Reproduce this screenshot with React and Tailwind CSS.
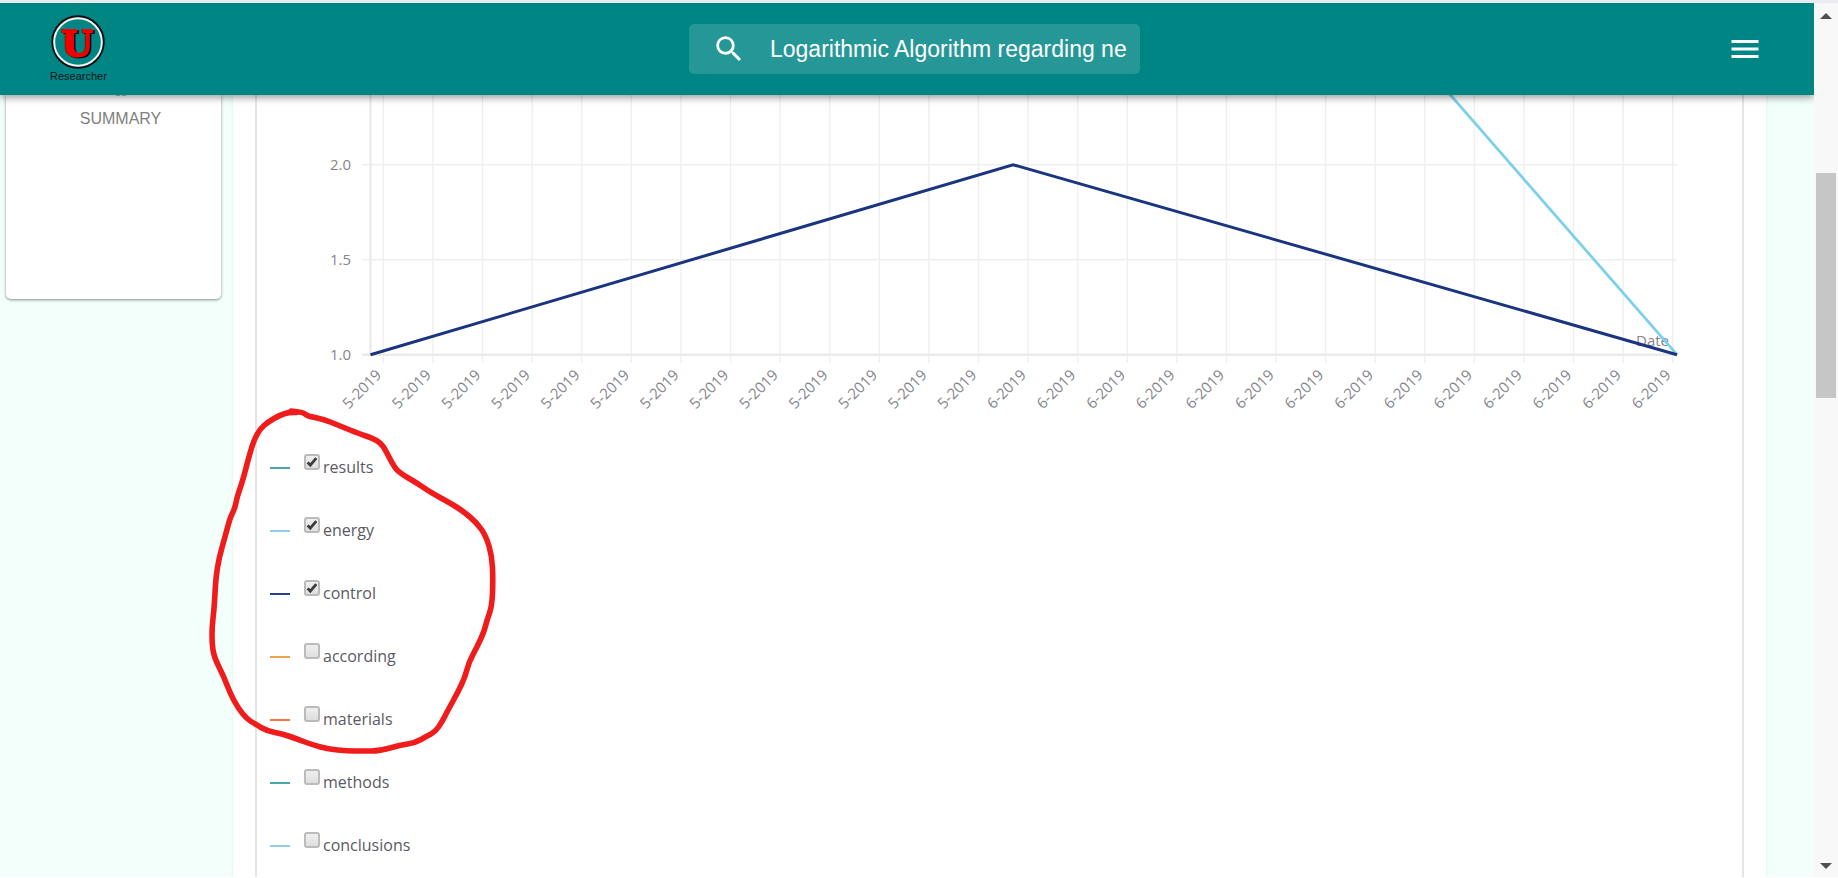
import { useState } from "react";
import { MdSearch, MdMenu } from "react-icons/md";

const TERMS = [
  { name: "results", color: "#45a9a9", on: true },
  { name: "energy", color: "#93cbe0", on: true },
  { name: "control", color: "#27408b", on: true },
  { name: "according", color: "#f0a050", on: false },
  { name: "materials", color: "#ff7043", on: false },
  { name: "methods", color: "#45a9a9", on: false },
  { name: "conclusions", color: "#8fd0e8", on: false },
];

const TICKS = Array.from({ length: 27 }, (_, i) => ({
  x: 126.4 + i * 49.59,
  label: i < 13 ? "5-2019" : "6-2019",
}));

const LEVELS = [
  { y: 69.7, label: "2.0" },
  { y: 164.7, label: "1.5" },
  { y: 259.7, label: "1.0" },
];

function Logo() {
  return (
    <svg viewBox="0 0 60 72" className="h-[72px] w-[60px]" role="img" aria-label="U Researcher">
      <circle cx="30" cy="29" r="25.6" fill="none" stroke="#0a0f0f" strokeWidth="2.2" />
      <circle cx="30" cy="29" r="23.8" fill="none" stroke="#f2f2f2" strokeWidth="2" />
      <g fontFamily="'DejaVu Serif', serif" fontWeight="700" fontSize="36" textAnchor="middle" strokeWidth="1.8">
        <text x="31" y="43.5" fill="#0a0a0a" stroke="#0a0a0a">U</text>
        <text x="29" y="42.5" fill="#f20000" stroke="#f20000">U</text>
      </g>
      <text x="2" y="67" fontFamily="'Liberation Sans', sans-serif" fontSize="11" fill="#0a1414">
        Researcher
      </text>
    </svg>
  );
}

function Header() {
  return (
    <header className="relative z-10 flex h-[92px] shrink-0 items-center justify-between bg-[#008585] pr-[51px] pl-12 shadow-[0_2px_8px_rgba(0,0,0,0.45)]">
      <a href="#home">
        <Logo />
      </a>
      <label className="mr-1.5 flex h-[50px] w-[451px] items-center rounded-[5px] bg-white/15 pr-2.5 pl-[23px] text-white">
        <MdSearch size={34} aria-hidden="true" />
        <input
          type="text"
          aria-label="Search"
          defaultValue="Logarithmic Algorithm regarding ne"
          className="ml-6 min-w-0 flex-1 bg-transparent font-['Liberation_Sans',sans-serif] text-[23px] text-white outline-none"
        />
      </label>
      <button type="button" aria-label="Menu" className="text-white">
        <MdMenu size={36} />
      </button>
    </header>
  );
}

function Sidebar() {
  return (
    <aside className="w-[233px] shrink-0 pr-3 pl-1.5">
      <div className="flex h-[204px] flex-col items-center rounded-b-[5px] bg-white shadow-[0_1px_3px_rgba(0,0,0,0.45)]">
        <a
          href="#summary"
          className="-mt-5 flex flex-col items-center gap-3 pl-3.5 font-['Liberation_Sans',sans-serif] text-base leading-5 text-[#808080]"
        >
          <svg viewBox="0 0 22 22" className="size-[22px]" aria-hidden="true">
            <path d="M3 2 H19 V15 H3 Z M6 15 H10 V20.5 H6 Z M12 15 H16 V20.5 H12 Z" fill="#7a7a7a" />
          </svg>
          SUMMARY
        </a>
      </div>
    </aside>
  );
}

function Chart() {
  return (
    <svg
      viewBox="0 0 1485 341"
      className="block w-full"
      fontFamily="'Open Sans', 'Noto Sans', sans-serif"
      fontSize="15"
      fill="#85858c"
    >
      <g stroke="#efeff2" strokeWidth="1.4">
        {TICKS.map((t) => (
          <line key={t.x} x1={t.x} x2={t.x} y1="-2" y2="268" />
        ))}
        {LEVELS.map((l) => (
          <line key={l.y} x1="105" x2="1420" y1={l.y} y2={l.y} />
        ))}
      </g>
      <g stroke="#ebebee" strokeWidth="2.4">
        <line x1="113.5" x2="113.5" y1="-2" y2="259.7" />
        <line x1="105" x2="1420" y1="259.7" y2="259.7" />
      </g>
      {LEVELS.map((l) => (
        <text key={l.y} x="94" y={l.y + 5} textAnchor="end">
          {l.label}
        </text>
      ))}
      {TICKS.map((t) => (
        <text key={t.x} textAnchor="end" transform={`translate(${t.x - 1} 281) rotate(-45)`}>
          {t.label}
        </text>
      ))}
      <text x="1412" y="251" textAnchor="end">
        Date
      </text>
      <path d="M1190 -4 L1420 259.7" fill="none" stroke="#7dd0ec" strokeWidth="2.8" />
      <path d="M113.5 259.7 L756 69.7 L1420 259.7" fill="none" stroke="#1a3480" strokeWidth="3" />
    </svg>
  );
}

function Legend() {
  const [checked, setChecked] = useState(TERMS.map((t) => t.on));
  const toggle = (i) => setChecked(checked.map((c, j) => (j === i ? !c : c)));
  return (
    <ul className="pl-[13px]">
      {TERMS.map((term, i) => (
        <li key={term.name} className="flex h-[63px] items-center">
          <span className="h-0.5 w-5" style={{ backgroundColor: term.color }} />
          <label className="ml-3.5 flex items-center gap-[3px] pb-0.5 font-['Open_Sans','Noto_Sans',sans-serif] text-base text-[#5a5a64]">
            <span className="mb-2.5 grid">
              <input
                type="checkbox"
                checked={checked[i]}
                onChange={() => toggle(i)}
                className="size-4 appearance-none rounded-[3px] border-2 border-[#bbbbbb] bg-linear-to-b from-[#efefef] to-[#dedede] [grid-area:1/1]"
              />
              {checked[i] && (
                <svg viewBox="0 0 16 16" className="pointer-events-none size-4 [grid-area:1/1]" aria-hidden="true">
                  <path d="M3.6 8.4 L6.3 11.2 L12.3 4.2" fill="none" stroke="#3c3c3c" strokeWidth="2.8" />
                </svg>
              )}
            </span>
            {term.name}
          </label>
        </li>
      ))}
    </ul>
  );
}

const POINTS = [
  [291, 411], [303, 412], [307, 416], [323, 419], [340, 426], [360, 434], [372, 438], [381, 443], [386, 451],
  [392, 463], [398, 472], [417, 483], [430, 492], [450, 503], [463, 511], [477, 523], [486, 536], [492, 556],
  [493, 580], [492, 606], [487, 620], [484, 632], [477, 647], [469, 662], [465, 677], [458, 692], [448, 710],
  [442, 722], [435, 732], [427, 736], [415, 743], [400, 745], [380, 751], [363, 751], [347, 751], [328, 749],
  [313, 745], [297, 739], [283, 734], [267, 731], [255, 724], [247, 719], [238, 708], [230, 693], [224, 677],
  [214, 657], [212, 643], [212, 627], [214, 610], [215, 593], [216, 577], [219, 558], [225, 537], [230, 518],
  [235, 508], [237, 497], [242, 483], [246, 468], [250, 453], [254, 440], [260, 429], [268, 422], [280, 415],
  [290, 412], [303, 413],
];

// Quadratic segments through the midpoints keep the pen line round.
const STROKE = POINTS.slice(1, -1).reduce((d, [x, y], i) => {
  const [nx, ny] = POINTS[i + 2];
  return `${d} Q${x} ${y} ${(x + nx) / 2} ${(y + ny) / 2}`;
}, `M${POINTS[0].join(" ")}`);

function Annotation() {
  return (
    <svg
      viewBox="200 400 300 360"
      className="pointer-events-none absolute top-[397px] left-[200px] z-20 h-[360px] w-[300px]"
      aria-hidden="true"
    >
      <path d={STROKE} fill="none" stroke="#f01c1c" strokeWidth="5.6" strokeLinejoin="round" strokeLinecap="round" />
    </svg>
  );
}

function Scrollbar() {
  return (
    <div className="flex w-6 shrink-0 flex-col items-center bg-[#f8f8f8] pt-2.5 pb-2" aria-hidden="true">
      <svg viewBox="0 0 12 6" className="h-1.5 w-3">
        <path d="M0 6 L6 0 L12 6 Z" fill="#505050" />
      </svg>
      <div className="mt-[154px] h-[225px] w-5 bg-[#c6c6c6]" />
      <svg viewBox="0 0 12 6" className="mt-auto h-1.5 w-3">
        <path d="M0 0 L6 6 L12 0 Z" fill="#505050" />
      </svg>
    </div>
  );
}

export default function App() {
  return (
    <div className="relative flex h-screen overflow-hidden border-t-[3px] border-b border-t-[#e9ebef] border-b-white">
      <div className="flex min-w-0 flex-1 flex-col overflow-hidden bg-[#f3fffb]">
        <Header />
        <div className="flex min-h-0 flex-1">
          <Sidebar />
          <main className="mr-12 min-w-0 flex-1 bg-white px-[22px] shadow-[0_0_3px_#d5f5d8]">
            <section className="border-x-2 border-[#e5e5e5]">
              <Chart />
              <Legend />
            </section>
          </main>
        </div>
      </div>
      <Scrollbar />
      <Annotation />
    </div>
  );
}
